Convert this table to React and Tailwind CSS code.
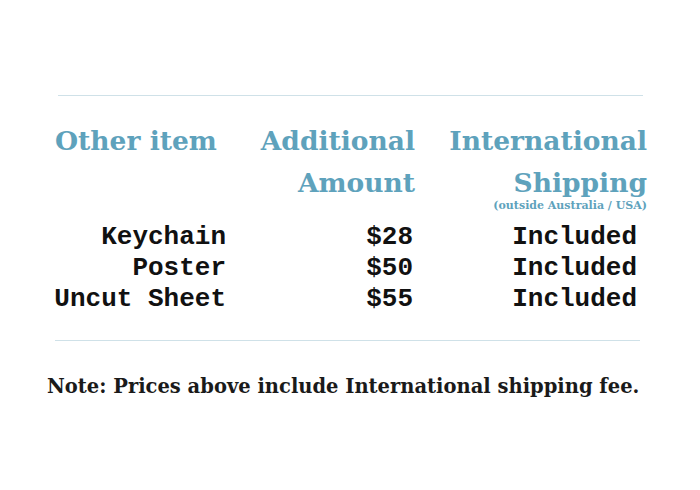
import React from "react";

const rows = [
    { item: "Keychain", amount: "$28", shipping: "Included" },
    { item: "Poster", amount: "$50", shipping: "Included" },
    { item: "Uncut Sheet", amount: "$55", shipping: "Included" },
];

const head = "font-['DejaVu_Serif',serif] font-bold text-[26.5px] leading-[42px] text-[#5ea2bc] whitespace-nowrap";
const mono = "font-['Liberation_Mono',monospace] font-bold text-[26px] leading-[31px] text-[#111] whitespace-nowrap";

const App = () => {
    return (
        <div className="w-[700px] h-[490px] bg-white pt-[95px]">
            <div className="ml-[58px] w-[585px] border-t border-[#cfe1e8]" />

            <div className="ml-[48px] mt-[24px] grid grid-cols-[178px_189px_232px]">
                <div className={`${head} text-left pl-[7px]`}>Other item</div>
                <div className={`${head} text-right`}>
                    Additional
                    <br />
                    Amount
                </div>
                <div className="text-right">
                    <div className={head}>
                        International
                        <br />
                        Shipping
                    </div>
                    <div className="font-['DejaVu_Serif',serif] font-bold text-[11px] leading-[12px] text-[#5ea2bc] -mt-[4px] whitespace-nowrap">
                        (outside Australia / USA)
                    </div>
                </div>

                {rows.map((row, i) => (
                    <React.Fragment key={row.item}>
                        <div className={`${mono} text-right ${i === 0 ? "mt-[10px]" : ""}`}>{row.item}</div>
                        <div className={`${mono} text-right pr-[2px] ${i === 0 ? "mt-[10px]" : ""}`}>{row.amount}</div>
                        <div className={`${mono} text-right pr-[10px] ${i === 0 ? "mt-[10px]" : ""}`}>{row.shipping}</div>
                    </React.Fragment>
                ))}
            </div>

            <div className="ml-[55px] mt-[25px] w-[585px] border-t border-[#cfe1e8]" />

            <p className="ml-[47px] mt-[33px] font-['DejaVu_Serif',serif] font-bold text-[19.5px] leading-[26px] text-[#1a1a1a] whitespace-nowrap">
                Note: Prices above include International shipping fee.
            </p>
        </div>
    );
};

export default App;
